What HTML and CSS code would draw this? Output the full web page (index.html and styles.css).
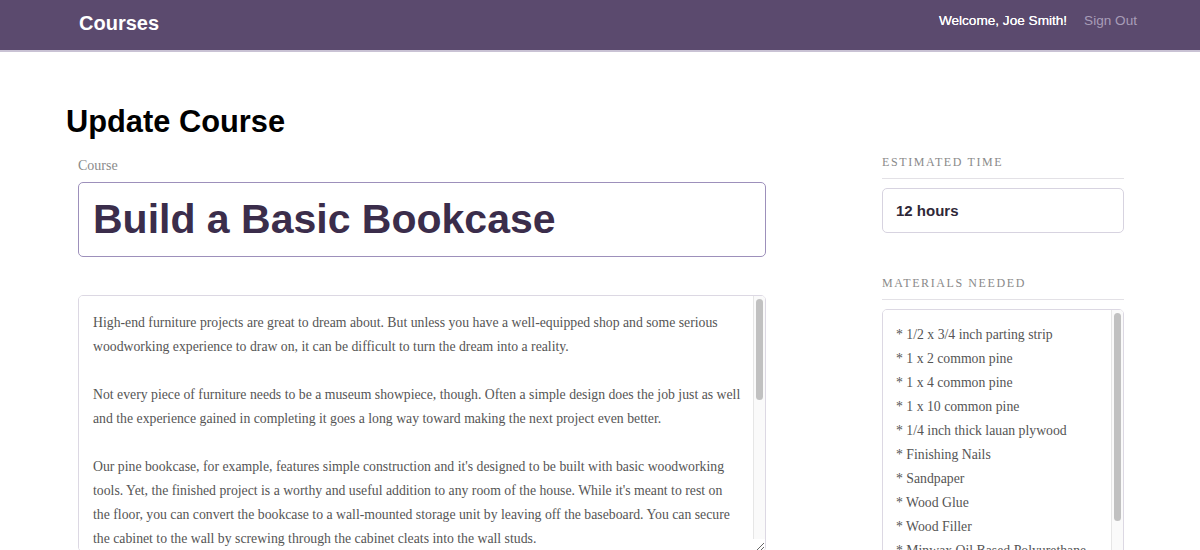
FILE: index.html
```html
<!DOCTYPE html>
<html>
<head>
<meta charset="utf-8">
<link rel="stylesheet" href="styles.css">
</head>
<body>
<header class="topbar">
  <div class="bounds">
    <h1 class="logo">Courses</h1>
    <nav class="nav">
      <span class="welcome">Welcome, Joe Smith!</span>
      <a class="signout" href="#">Sign Out</a>
    </nav>
  </div>
</header>
<main class="page">
  <h1 class="page-title">Update Course</h1>
  <form class="course-form">
    <div class="main-col">
      <label class="field-label">Course</label>
      <input class="title-input" type="text" value="Build a Basic Bookcase">
      <div class="scroll-box desc-box">
        <textarea class="desc-input">High-end furniture projects are great to dream about. But unless you have a well-equipped shop and some serious woodworking experience to draw on, it can be difficult to turn the dream into a reality.

Not every piece of furniture needs to be a museum showpiece, though. Often a simple design does the job just as well and the experience gained in completing it goes a long way toward making the next project even better.

Our pine bookcase, for example, features simple construction and it's designed to be built with basic woodworking tools. Yet, the finished project is a worthy and useful addition to any room of the house. While it's meant to rest on the floor, you can convert the bookcase to a wall-mounted storage unit by leaving off the baseboard. You can secure the cabinet to the wall by screwing through the cabinet cleats into the wall studs.

We made our bookcase out of materials available at most building-supply dealers and lumberyards, including 1/2 x 3/4-in. parting strip, 1 x 2 and 1 x 4 common pine and 1/4-in.-thick lauan plywood. Assembly is quick and easy with glue and nails, and when you're done with construction you have the option of a painted or clear finish.

As for basic tools, you'll need a portable circular saw, hammer, block plane, combination square, tape measure, metal rule, two clamps, nail set and putty knife. Other supplies include glue, nails, sandpaper, wood filler and varnish or paint and shellac.</textarea>
        <div class="fake-scroll"><div class="fake-thumb desc-thumb"></div></div>
      </div>
    </div>
    <aside class="side-col">
      <div class="side-group">
        <h3 class="side-label">Estimated Time</h3>
        <input class="time-input" type="text" value="12 hours">
      </div>
      <div class="side-group">
        <h3 class="side-label">Materials Needed</h3>
        <div class="scroll-box mat-box">
          <textarea class="materials-input">* 1/2 x 3/4 inch parting strip
* 1 x 2 common pine
* 1 x 4 common pine
* 1 x 10 common pine
* 1/4 inch thick lauan plywood
* Finishing Nails
* Sandpaper
* Wood Glue
* Wood Filler
* Minwax Oil Based Polyurethane</textarea>
          <div class="fake-scroll"><div class="fake-thumb mat-thumb"></div></div>
        </div>
      </div>
    </aside>
  </form>
</main>
</body>
</html>
```
FILE: styles.css
```css
* { box-sizing: border-box; }
html, body { margin: 0; padding: 0; background: #fff; }
body { font-family: "Liberation Sans", Arial, sans-serif; color: #000; overflow: hidden; }

.topbar {
  height: 52px;
  background: #5b4a6e;
  border-bottom: 2px solid #c9c2d4;
}
.topbar .bounds {
  display: flex;
  justify-content: space-between;
  align-items: center;
  padding: 0 63px 0 79px;
  height: 50px;
  padding-bottom: 6px;
}
.logo {
  margin: 0;
  font-size: 20px;
  font-weight: bold;
  color: #fff;
  padding-top: 2px;
}
.nav { display: flex; gap: 17px; font-size: 13.6px; margin-top: -4px; }
.welcome { color: #fff; text-shadow: 0 0 0.2px #fff; }
.signout { color: #a89db8; text-decoration: none; }

.page { padding: 0 0 0 66px; }
.page-title {
  margin: 52px 0 0;
  font-size: 30.8px;
  line-height: 36px;
  font-weight: bold;
}

.course-form {
  display: grid;
  grid-template-columns: 688px 242px;
  column-gap: 116px;
  padding-left: 12px;
  margin-top: 18px;
  align-items: start;
}
.main-col { display: flex; flex-direction: column; }
.field-label {
  font-family: "Liberation Serif", "Times New Roman", serif;
  font-size: 14px;
  color: #8b8b8b;
  line-height: 16px;
}
.title-input {
  margin-top: 8px;
  height: 75px;
  border: 1px solid #9d90bb;
  border-radius: 5px;
  padding: 0 14px;
  font-family: "Liberation Sans", Arial, sans-serif;
  font-weight: bold;
  font-size: 41px;
  color: #3b2d4b;
  outline: none;
}

.scroll-box { position: relative; display: flex; flex-direction: column; }
.scroll-box textarea { scrollbar-width: none; }
.scroll-box textarea::-webkit-scrollbar { display: none; }

.desc-box { margin-top: 38px; }
.desc-input {
  height: 257px;
  border: 1px solid #dcd8e3;
  border-radius: 5px;
  padding: 15px 24px 15px 14px;
  font-family: "Liberation Serif", "Times New Roman", serif;
  font-size: 13.75px;
  line-height: 24px;
  color: #555;
  resize: vertical;
  outline: none;
  overflow-y: scroll;
}

.fake-scroll {
  position: absolute;
  top: 1px;
  right: 1px;
  width: 12px;
  background: #fafafa;
  border-left: 1px solid #e6e6e6;
  border-top-right-radius: 4px;
  padding: 3px 2px 0 2px;
}
.desc-box .fake-scroll { bottom: 13px; }
.mat-box .fake-scroll { bottom: 0; }
.fake-thumb {
  background: #c1c1c1;
  border-radius: 4px;
  width: 7px;
}
.desc-thumb { height: 101px; }
.mat-thumb { height: 208px; }

.side-col { margin-top: -5px; }
.side-group { display: flex; flex-direction: column; }
.side-group + .side-group { margin-top: 41px; }
.side-label {
  margin: 0 0 9px;
  font-family: "Liberation Serif", "Times New Roman", serif;
  font-weight: normal;
  font-size: 12px;
  letter-spacing: 1.6px;
  text-transform: uppercase;
  color: #8a8a8a;
  line-height: 14px;
  padding: 2px 0 9px;
  border-bottom: 1px solid #e3e1e6;
}
.time-input {
  height: 45px;
  border: 1px solid #d7d3e0;
  border-radius: 5px;
  padding: 0 13px;
  font-family: "Liberation Sans", Arial, sans-serif;
  font-weight: bold;
  font-size: 15px;
  color: #2f2838;
  outline: none;
}
.materials-input {
  height: 260px;
  border: 1px solid #dcd8e3;
  border-radius: 5px;
  padding: 13px 26px 13px 13px;
  font-family: "Liberation Serif", "Times New Roman", serif;
  font-size: 13.75px;
  line-height: 24px;
  color: #555;
  resize: none;
  outline: none;
  overflow-y: scroll;
}
```
